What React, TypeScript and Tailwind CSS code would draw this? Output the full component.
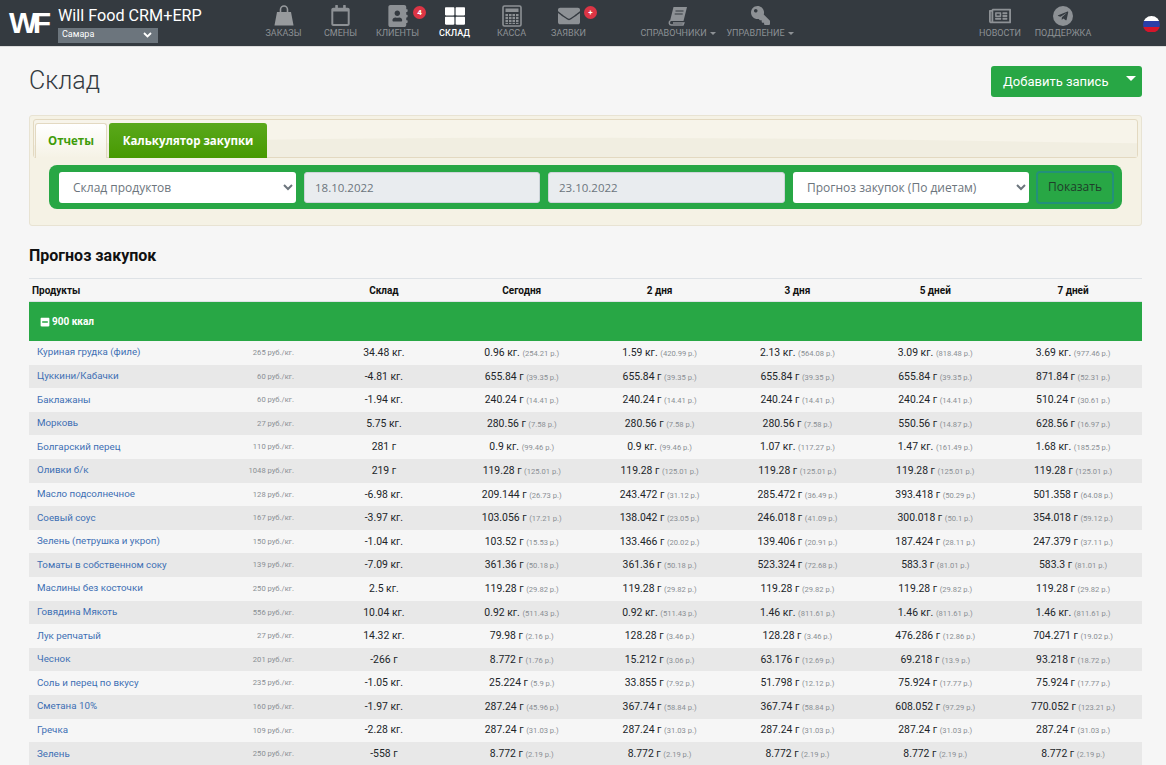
import {
  FaAddressBook,
  FaEnvelope,
  FaKey,
  FaMinusSquare,
  FaRegCalendar,
  FaRegNewspaper,
  FaTelegramPlane,
  FaThLarge,
} from 'react-icons/fa';
import type { ReactNode } from 'react';

type Cell = [string, string];

const v = (amount: string, price: string, n = 1): Cell[] =>
  Array.from({ length: n }, () => [amount, price] as Cell);

const rows: { name: string; price: string; stock: string; cells: Cell[] }[] = [
  { name: 'Куриная грудка (филе)', price: '265', stock: '34.48 кг.', cells: [...v('0.96 кг.', '254.21'), ...v('1.59 кг.', '420.99'), ...v('2.13 кг.', '564.08'), ...v('3.09 кг.', '818.48'), ...v('3.69 кг.', '977.46')] },
  { name: 'Цуккини/Кабачки', price: '60', stock: '-4.81 кг.', cells: [...v('655.84 г', '39.35', 4), ...v('871.84 г', '52.31')] },
  { name: 'Баклажаны', price: '60', stock: '-1.94 кг.', cells: [...v('240.24 г', '14.41', 4), ...v('510.24 г', '30.61')] },
  { name: 'Морковь', price: '27', stock: '5.75 кг.', cells: [...v('280.56 г', '7.58', 3), ...v('550.56 г', '14.87'), ...v('628.56 г', '16.97')] },
  { name: 'Болгарский перец', price: '110', stock: '281 г', cells: [...v('0.9 кг.', '99.46', 2), ...v('1.07 кг.', '117.27'), ...v('1.47 кг.', '161.49'), ...v('1.68 кг.', '185.25')] },
  { name: 'Оливки б/к', price: '1048', stock: '219 г', cells: v('119.28 г', '125.01', 5) },
  { name: 'Масло подсолнечное', price: '128', stock: '-6.98 кг.', cells: [...v('209.144 г', '26.73'), ...v('243.472 г', '31.12'), ...v('285.472 г', '36.49'), ...v('393.418 г', '50.29'), ...v('501.358 г', '64.08')] },
  { name: 'Соевый соус', price: '167', stock: '-3.97 кг.', cells: [...v('103.056 г', '17.21'), ...v('138.042 г', '23.05'), ...v('246.018 г', '41.09'), ...v('300.018 г', '50.1'), ...v('354.018 г', '59.12')] },
  { name: 'Зелень (петрушка и укроп)', price: '150', stock: '-1.04 кг.', cells: [...v('103.52 г', '15.53'), ...v('133.466 г', '20.02'), ...v('139.406 г', '20.91'), ...v('187.424 г', '28.11'), ...v('247.379 г', '37.11')] },
  { name: 'Томаты в собственном соку', price: '139', stock: '-7.09 кг.', cells: [...v('361.36 г', '50.18', 2), ...v('523.324 г', '72.68'), ...v('583.3 г', '81.01', 2)] },
  { name: 'Маслины без косточки', price: '250', stock: '2.5 кг.', cells: v('119.28 г', '29.82', 5) },
  { name: 'Говядина Мякоть', price: '556', stock: '10.04 кг.', cells: [...v('0.92 кг.', '511.43', 2), ...v('1.46 кг.', '811.61', 3)] },
  { name: 'Лук репчатый', price: '27', stock: '14.32 кг.', cells: [...v('79.98 г', '2.16'), ...v('128.28 г', '3.46', 2), ...v('476.286 г', '12.86'), ...v('704.271 г', '19.02')] },
  { name: 'Чеснок', price: '201', stock: '-266 г', cells: [...v('8.772 г', '1.76'), ...v('15.212 г', '3.06'), ...v('63.176 г', '12.69'), ...v('69.218 г', '13.9'), ...v('93.218 г', '18.72')] },
  { name: 'Соль и перец по вкусу', price: '235', stock: '-1.05 кг.', cells: [...v('25.224 г', '5.9'), ...v('33.855 г', '7.92'), ...v('51.798 г', '12.12'), ...v('75.924 г', '17.77', 2)] },
  { name: 'Сметана 10%', price: '160', stock: '-1.97 кг.', cells: [...v('287.24 г', '45.96'), ...v('367.74 г', '58.84', 2), ...v('608.052 г', '97.29'), ...v('770.052 г', '123.21')] },
  { name: 'Гречка', price: '109', stock: '-2.28 кг.', cells: v('287.24 г', '31.03', 5) },
  { name: 'Зелень', price: '250', stock: '-558 г', cells: v('8.772 г', '2.19', 5) },
];

function BagIcon() {
  return (
    <svg width="20" height="21" viewBox="0 0 20 21" fill="none">
      <path d="M3 7h14l2.5 13.5H.5z" fill="#979a9d" />
      <path d="M6.5 10V4.5a3.5 3.5 0 017 0V10" stroke="#979a9d" strokeWidth="1.6" />
    </svg>
  );
}

function CalcIcon() {
  const keys = [9, 12, 15];
  return (
    <svg width="20" height="22" viewBox="0 0 20 22" fill="currentColor">
      <rect x="1" y="1" width="18" height="20" rx="1.5" fill="none" stroke="currentColor" strokeWidth="1.6" />
      <rect x="3.5" y="3.5" width="13" height="3.5" />
      {keys.map((y) =>
        [3.5, 7, 10.5, 14].map((x) => <rect key={`${x}-${y}`} x={x} y={y} width="2.5" height="2.2" />),
      )}
      <rect x="3.5" y="18" width="2.5" height="1" />
      <rect x="7" y="18" width="2.5" height="1" />
      <rect x="10.5" y="18" width="2.5" height="1" />
      <rect x="14" y="18" width="2.5" height="1" />
    </svg>
  );
}

function BookIcon() {
  return (
    <svg width="20" height="20" viewBox="0 0 20 20" fill="none">
      <path d="M5.5 1H19l-3.5 14H2z" fill="currentColor" />
      <path d="M2.5 14.5C.5 16 1 19 3.5 19H15l.8-2H5" stroke="currentColor" strokeWidth="1.5" />
      <path d="M7.5 5h8M6.7 8h8" stroke="#343a40" strokeWidth="1.2" />
    </svg>
  );
}

function NavItem({ icon, label, width, active, badge, caret }: { icon: ReactNode; label: string; width: string; active?: boolean; badge?: string; caret?: boolean }) {
  return (
    <div className={`relative flex flex-col items-center pb-[2px] ${width} ${active ? 'text-white font-medium' : 'text-[#8d9195]'}`}>
      <div className="flex h-[23px] items-center justify-center">{icon}</div>
      <div className="flex items-center whitespace-nowrap text-[9px] leading-[13px]">
        {label}
        {caret && <span className="ml-[3px] h-0 w-0 border-x-[3px] border-t-[3px] border-x-transparent border-t-[#8d9195]" />}
      </div>
      {badge && (
        <span className="absolute left-[44px] top-[2px] flex h-[13px] w-[13px] items-center justify-center rounded-full bg-[#dc3545] text-[8px] font-bold text-white">
          {badge}
        </span>
      )}
    </div>
  );
}

export default function App() {
  return (
    <div className="h-screen overflow-hidden bg-[#f6f6f6] font-['Roboto',sans-serif] text-[#212529]">
      <header className="flex h-[47px] items-center border-b border-[#dcdcdc] bg-[#343a40]">
        <div className="ml-[9px] w-[38px] font-['Liberation_Sans',sans-serif] text-[30px] font-bold leading-none tracking-[-4.5px] text-white">WF</div>
        <div className="ml-[11px] mt-[2px] w-[197px]">
          <div className="text-[16.2px] leading-[19px] text-white">Will Food CRM+ERP</div>
          <div className="mt-[3px] flex h-[15px] w-[100px] items-center justify-between bg-[#6c757d] pl-[4px] pr-[6px] text-[9px] text-white">
            Самара
            <svg width="9" height="6" viewBox="0 0 9 6" fill="none" stroke="white" strokeWidth="1.8">
              <path d="M1 1l3.5 3.5L8 1" />
            </svg>
          </div>
        </div>
        <div className="flex">
          <NavItem width="w-[57px]" label="ЗАКАЗЫ" icon={<BagIcon />} />
          <NavItem width="w-[57px]" label="СМЕНЫ" icon={<FaRegCalendar size={21} />} />
          <NavItem width="w-[57px]" label="КЛИЕНТЫ" badge="4" icon={<FaAddressBook size={22} />} />
          <NavItem width="w-[57px]" label="СКЛАД" active icon={<FaThLarge size={20} />} />
          <NavItem width="w-[57px]" label="КАССА" icon={<CalcIcon />} />
          <NavItem width="w-[57px]" label="ЗАЯВКИ" badge="+" icon={<FaEnvelope size={22} />} />
        </div>
        <div className="ml-[41px] flex gap-[2px]">
          <NavItem width="w-[80px]" label="СПРАВОЧНИКИ" caret icon={<BookIcon />} />
          <NavItem width="w-[80px]" label="УПРАВЛЕНИЕ" caret icon={<FaKey size={19} className="-scale-x-100" />} />
        </div>
        <div className="ml-auto flex items-center">
          <NavItem width="w-[60px]" label="НОВОСТИ" icon={<FaRegNewspaper size={22} />} />
          <NavItem width="w-[66px]" label="ПОДДЕРЖКА" icon={
            <span className="flex h-[20px] w-[20px] items-center justify-center rounded-full bg-[#8d9195]">
              <FaTelegramPlane size={12} className="text-[#343a40]" />
            </span>
          } />
          <div className="ml-[47px] mr-[6px] mt-[2px] h-[17px] w-[17px] overflow-hidden rounded-full">
            <div className="h-1/3 bg-white" />
            <div className="h-1/3 bg-[#2a3fa8]" />
            <div className="h-1/3 bg-[#d5152b]" />
          </div>
        </div>
      </header>

      <main className="px-[29px] pr-[24px]">
        <div className="flex items-start justify-between pt-[19px]">
          <h1 className="text-[25px] font-light leading-[30px] text-[#343a40]">Склад</h1>
          <div className="flex h-[31px] w-[151px] items-center justify-between rounded-[3px] bg-[#28a745] pl-[12px] pr-[6px] text-[13px] text-white">
            Добавить запись
            <span className="mb-[6px] h-0 w-0 border-x-[5px] border-t-[5px] border-x-transparent border-t-white" />
          </div>
        </div>

        <section className="mt-[18px] h-[111px] rounded-[3px] border border-[#e8e3d3] bg-[#f5f2e5] px-[3px] pt-[3px]">
          <div className="relative flex h-[39px] items-end gap-[2px] rounded-[3px] border border-[#e3d9c1] bg-[#f7f4ea] pl-[1px] font-['Open_Sans',sans-serif] text-[11.5px] font-bold">
            <svg className="absolute inset-0 h-full w-full" viewBox="0 0 1000 38" preserveAspectRatio="none">
              <path d="M0 26C250 16 600 16 1000 24V38H0z" fill="#f1eee1" />
            </svg>
            <div className="relative mb-[-1px] flex h-[35px] w-[72px] items-center justify-center rounded-t-[3px] border border-b-0 border-[#e3d9c1] bg-gradient-to-b from-white to-[#f5f2e5] text-[#3f9c0a]">Отчеты</div>
            <div className="relative mb-[-1px] flex h-[35px] w-[158px] items-center justify-center rounded-t-[3px] bg-gradient-to-b from-[#5aa81a] to-[#479a00] text-white">Калькулятор закупки</div>
          </div>
          <form className="mx-[16px] mt-[7px] flex h-[44px] items-center gap-[8px] rounded-[8px] bg-[#28a745] pl-[10px] pr-[7px] font-['Open_Sans',sans-serif] text-[12px] text-[#6c757d]">
            <select defaultValue="a" className="h-[31px] w-[237px] rounded-[3px] bg-white pl-[10px]">
              <option value="a">Склад продуктов</option>
            </select>
            <input readOnly value="18.10.2022" className="h-[31px] w-[236px] rounded-[3px] border border-[#ced4da] bg-[#e9ecef] px-[10px] text-[11.5px]" />
            <input readOnly value="23.10.2022" className="h-[31px] w-[237px] rounded-[3px] border border-[#ced4da] bg-[#e9ecef] px-[10px] text-[11.5px]" />
            <select defaultValue="a" className="h-[31px] w-[236px] rounded-[3px] bg-white pl-[10px]">
              <option value="a">Прогноз закупок (По диетам)</option>
            </select>
            <button type="button" className="ml-[-1px] h-[33px] w-[78px] rounded-[4px] border-2 border-[#23907a] text-[#1f3d2a]">Показать</button>
          </form>
        </section>

        <h2 className="mt-[20px] text-[16px] font-bold leading-[19px] text-[#111]">Прогноз закупок</h2>

        <table className="mt-[13px] w-full table-fixed border-collapse text-[10.4px]">
          <colgroup>
            <col className="w-[286px]" />
            <col span={6} />
          </colgroup>
          <thead>
            <tr className="h-[23px] border-y border-[#dee2e6] text-[10px] font-bold text-[#111]">
              <th className="pl-[3px] text-left">Продукты</th>
              {['Склад', 'Сегодня', '2 дня', '3 дня', '5 дней', '7 дней'].map((t) => (
                <th key={t} className="text-center">{t}</th>
              ))}
            </tr>
          </thead>
          <tbody>
            <tr className="h-[39.5px] bg-[#28a745] text-[10px] font-bold text-white">
              <td colSpan={7} className="pl-[11px]">
                <span className="flex items-center gap-[2px]">
                  <FaMinusSquare size={10} />
                  900 ккал
                </span>
              </td>
            </tr>
            {rows.map((row, i) => (
              <tr key={row.name} className={`h-[23.6px] ${i % 2 ? 'bg-[#e8e8e8]' : ''}`}>
                <td className="pl-[8px] pr-[21px]">
                  <div className="flex items-center justify-between">
                    <a className="text-[9.75px] text-[#3d6fb4]">{row.name}</a>
                    <span className="text-[7.6px] text-[#8a8f94]">{row.price} руб./кг.</span>
                  </div>
                </td>
                <td className="text-center">{row.stock}</td>
                {row.cells.map((c, j) => (
                  <td key={j} className="text-center">
                    {c[0]} <span className="text-[7.6px] text-[#8a8f94]">({c[1]} р.)</span>
                  </td>
                ))}
              </tr>
            ))}
          </tbody>
        </table>
      </main>
    </div>
  );
}
